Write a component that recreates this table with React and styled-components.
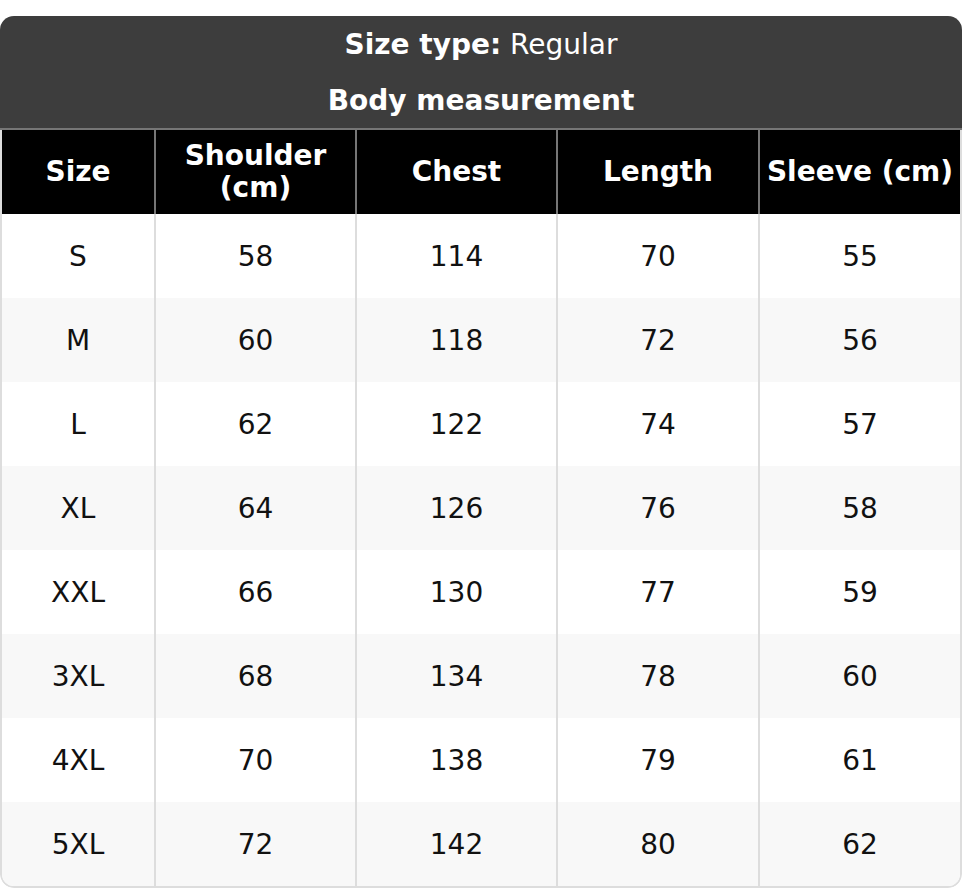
import React from 'react';
import styled, { createGlobalStyle } from 'styled-components';

const GlobalStyle = createGlobalStyle`
    * { box-sizing: border-box; }
    html, body { margin: 0; padding: 0; overflow: hidden; background: #fff; }
    body { font-family: "DejaVu Sans", Verdana, sans-serif; }
`;

const Card = styled.div`
    margin-top: 16px;
    width: 962px;
    border-radius: 14px;
    overflow: hidden;
`;

const Title = styled.div`
    background-color: #3d3d3d;
    color: #fff;
    border-bottom: 2px solid #767676;
`;

const TitleLine = styled.div`
    height: 56px;
    display: flex;
    align-items: center;
    justify-content: center;
    font-size: 28px;
    font-weight: ${(p) => (p.bold ? 'bold' : 'normal')};
    b { font-weight: bold; }
`;

const TableBox = styled.div`
    border: 2px solid #dddddd;
    border-top: none;
    border-radius: 0 0 14px 14px;
    overflow: hidden;
`;

const Table = styled.table`
    width: 100%;
    table-layout: fixed;
    border-collapse: separate;
    border-spacing: 0;
`;

const HeadCell = styled.th`
    width: ${(p) => p.w}px;
    height: 84px;
    padding: 0 6px;
    background-color: #000;
    color: #fff;
    font-size: 28px;
    line-height: 32px;
    font-weight: bold;
    text-align: center;
    border-right: ${(p) => (p.last ? 'none' : '2px solid #767676')};
`;

const Row = styled.tr`
    background-color: ${(p) => (p.striped ? '#f8f8f8' : '#fff')};
`;

const Cell = styled.td`
    height: 84px;
    padding: 0 6px;
    color: #111;
    font-size: 28px;
    text-align: center;
    border-right: ${(p) => (p.last ? 'none' : '2px solid #dddddd')};
`;

const columns = [
    { label: 'Size', w: 154 },
    { label: 'Shoulder (cm)', w: 201 },
    { label: 'Chest', w: 201 },
    { label: 'Length', w: 202 },
    { label: 'Sleeve (cm)', w: 200 },
];

const rows = [
    ['S', 58, 114, 70, 55],
    ['M', 60, 118, 72, 56],
    ['L', 62, 122, 74, 57],
    ['XL', 64, 126, 76, 58],
    ['XXL', 66, 130, 77, 59],
    ['3XL', 68, 134, 78, 60],
    ['4XL', 70, 138, 79, 61],
    ['5XL', 72, 142, 80, 62],
];

export default function App() {
    return (
        <>
            <GlobalStyle />
            <Card>
                <Title>
                    <TitleLine>
                        <b>Size type:</b>&nbsp;Regular
                    </TitleLine>
                    <TitleLine bold>Body measurement</TitleLine>
                </Title>
                <TableBox>
                    <Table>
                        <thead>
                            <tr>
                                {columns.map((c, i) => (
                                    <HeadCell key={c.label} w={c.w} last={i === columns.length - 1}>
                                        {c.label}
                                    </HeadCell>
                                ))}
                            </tr>
                        </thead>
                        <tbody>
                            {rows.map((r, ri) => (
                                <Row key={r[0]} striped={ri % 2 === 1}>
                                    {r.map((v, i) => (
                                        <Cell key={i} last={i === r.length - 1}>
                                            {v}
                                        </Cell>
                                    ))}
                                </Row>
                            ))}
                        </tbody>
                    </Table>
                </TableBox>
            </Card>
        </>
    );
}
